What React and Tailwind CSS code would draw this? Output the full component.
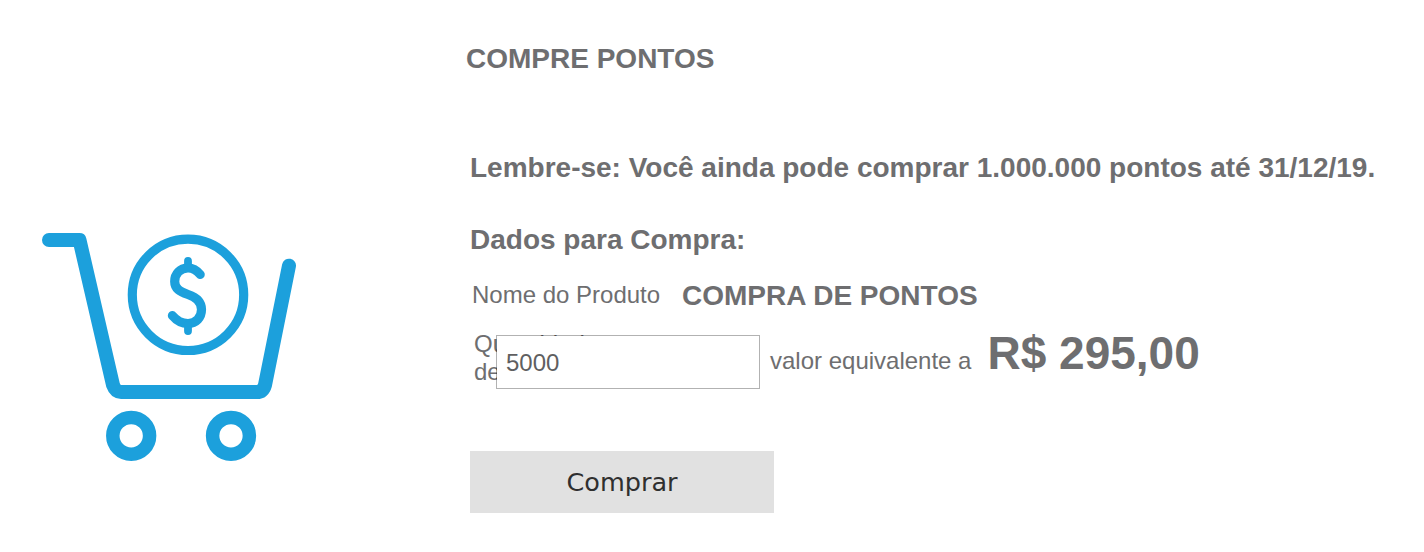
import { useState } from "react";

function CartIcon() {
  return (
    <svg
      width="280"
      height="250"
      viewBox="30 220 280 250"
      fill="none"
      stroke="#1ca0dc"
      strokeLinecap="round"
      strokeLinejoin="round"
    >
      {/* Basket */}
      <path
        d="M49 240H79.5L113 385Q115.5 392 121 392H257Q263 392 265 385L289 265.7"
        strokeWidth="14"
      />
      {/* Wheels */}
      <circle cx="131.2" cy="435.8" r="18.4" strokeWidth="13.5" />
      <circle cx="231" cy="435.8" r="18.4" strokeWidth="13.5" />
      {/* Coin */}
      <circle cx="188" cy="294.8" r="55.7" strokeWidth="9.2" />
      <path
        d="M200.2 274.5C197 270.5 193 268 188 268C180 268 174.7 274 174.7 281.5C174.7 288.5 179.5 291.5 188 294.5C197 297.5 201.5 302 201.5 309.5C201.5 317.5 196 323.5 188 323.5C181.5 323.5 176.5 320.5 172.4 315.6"
        strokeWidth="9.2"
      />
      <path d="M188 261V267M188 325V331" strokeWidth="7.8" />
    </svg>
  );
}

export default function App() {
  const [quantity, setQuantity] = useState("5000");

  return (
    <div className="flex h-[552px] w-[1424px] overflow-hidden bg-white pl-[30px] font-['Liberation_Sans',Arial,sans-serif] text-[#6e6e70]">
      <div className="w-[436px] shrink-0 pt-[220px]">
        <CartIcon />
      </div>

      <div className="pt-[43px]">
        <h1 className="text-[28px] leading-8 font-bold">COMPRE PONTOS</h1>

        <div className="pt-[77px] pl-1">
          <p className="text-[28px] leading-8 font-bold whitespace-nowrap">
            Lembre-se: Você ainda pode comprar 1.000.000 pontos até 31/12/19.
          </p>
          <h2 className="mt-10 text-[28px] leading-8 font-bold">
            Dados para Compra:
          </h2>

          <div className="mt-6 flex items-start pl-0.5">
            <span className="w-[210px] text-2xl leading-[30px]">
              Nome do Produto
            </span>
            <span className="text-[28px] leading-8 font-bold">
              COMPRA DE PONTOS
            </span>
          </div>

          <div className="mt-[18px] flex h-[60px] items-start pl-1">
            {/* The label runs on behind the input, its ascenders show through the border */}
            <label
              htmlFor="quantity"
              className="w-[22px] shrink-0 text-2xl leading-7 whitespace-nowrap"
            >
              Quantidade
              <br />
              de Pontos
            </label>
            <input
              id="quantity"
              value={quantity}
              onChange={(e) => setQuantity(e.target.value)}
              className="relative mt-[5px] h-[54px] w-[264px] border border-black/30 bg-white bg-clip-padding px-[9px] pt-[2px] text-2xl text-[#5f5f61] outline-none"
            />
            <span className="mt-[15px] ml-[10px] text-2xl leading-8">
              valor equivalente a
            </span>
            <span className="-mt-px ml-4 text-[46px] leading-[48px] font-bold">
              R$ 295,00
            </span>
          </div>

          <button className="mt-[61px] block h-[62px] w-[304px] bg-[#e1e1e1] font-['DejaVu_Sans',Verdana,sans-serif] text-[25.5px] text-[#2f2f2f]">
            Comprar
          </button>
        </div>
      </div>
    </div>
  );
}
